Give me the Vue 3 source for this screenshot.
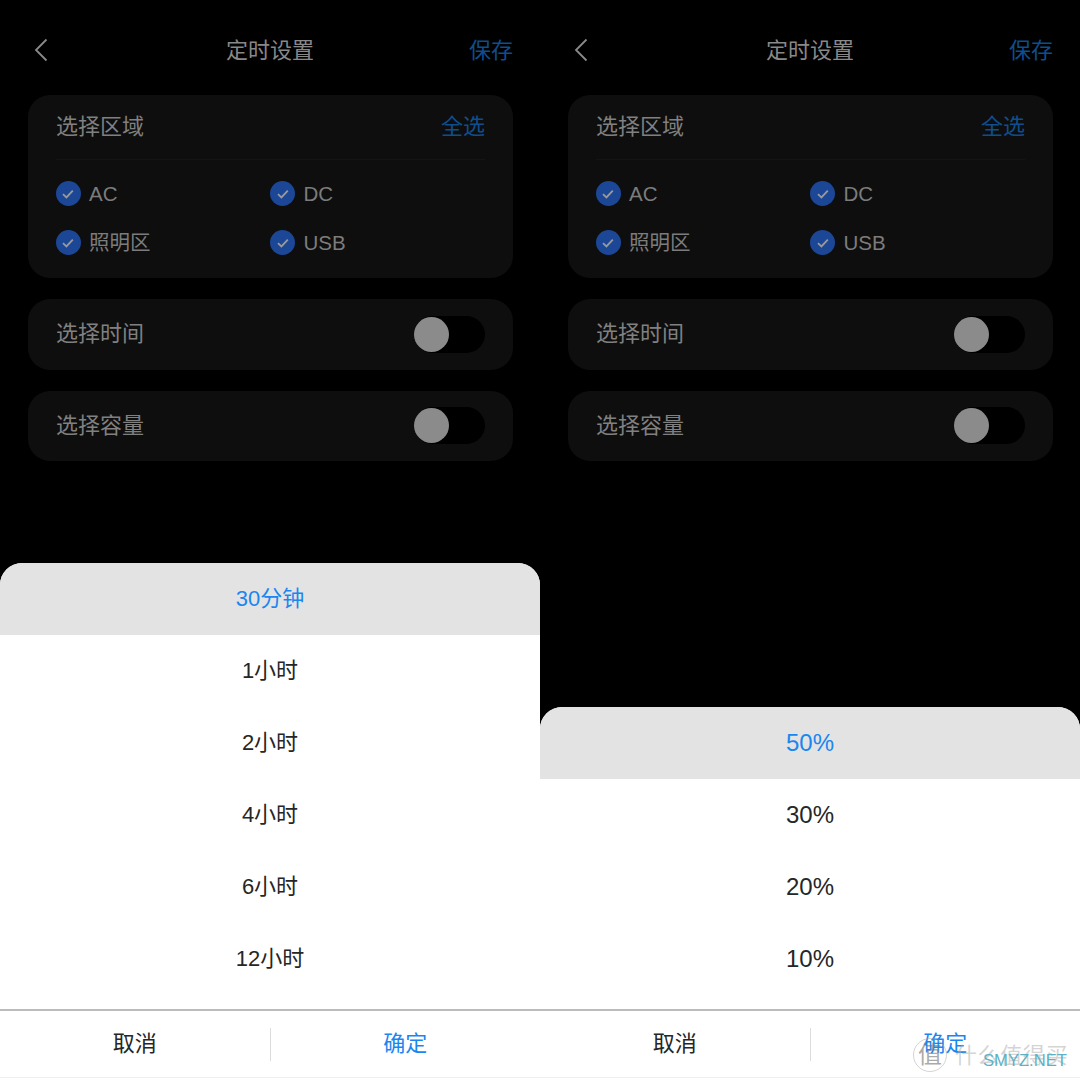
<script setup>
const panels = [
  { id: 'time', options: ['30分钟', '1小时', '2小时', '4小时', '6小时', '12小时'] },
  { id: 'capacity', options: ['50%', '30%', '20%', '10%'] }
]
const zones = ['AC', 'DC', '照明区', 'USB']
const toggles = ['选择时间', '选择容量']
</script>

<template>
  <div class="page">
    <section v-for="panel in panels" :key="panel.id" class="panel">
      <header class="topbar">
        <svg class="back" width="14" height="24" viewBox="0 0 14 24" fill="none">
          <path d="M12.5 1.5 L2 12 L12.5 22.5" stroke="#8a8a8a" stroke-width="1.8" />
        </svg>
        <h1 class="title">定时设置</h1>
        <span class="save">保存</span>
      </header>

      <div class="cards">
        <div class="card zone-card">
          <div class="zone-head">
            <span class="label">选择区域</span>
            <span class="select-all">全选</span>
          </div>
          <div class="zone-grid">
            <div v-for="zone in zones" :key="zone" class="zone">
              <span class="check">
                <svg width="14" height="12" viewBox="0 0 14 12" fill="none">
                  <path d="M2 6.2 L5.4 9.4 L11.8 2.6" stroke="#9a9a9a" stroke-width="1.8" />
                </svg>
              </span>
              <span class="zone-name">{{ zone }}</span>
            </div>
          </div>
        </div>

        <div v-for="toggle in toggles" :key="toggle" class="card toggle-card">
          <span class="label">{{ toggle }}</span>
          <span class="switch"><span class="knob"></span></span>
        </div>
      </div>

      <div class="sheet" :class="panel.id">
        <div
          v-for="(option, index) in panel.options"
          :key="option"
          class="option"
          :class="{ selected: index === 0 }"
        >{{ option }}</div>
        <div class="footer">
          <button class="action">取消</button>
          <span class="separator"></span>
          <button class="action primary">确定</button>
        </div>
      </div>
    </section>

    <div class="watermark">
      <span class="seal">值</span>
      <span class="wm-cn">什么值得买</span>
      <span class="wm-en">SMYZ.NET</span>
    </div>
  </div>
</template>

<style>
html, body { margin: 0; background: #000; }
</style>

<style scoped>
.page {
  position: relative;
  display: flex;
  width: 1080px;
  height: 1080px;
  overflow: hidden;
  background: #000;
  font-family: "Liberation Sans", "Noto Sans CJK SC", sans-serif;
}
.panel {
  display: flex;
  flex-direction: column;
  width: 540px;
  height: 1080px;
}
.topbar {
  position: relative;
  display: flex;
  align-items: center;
  justify-content: center;
  height: 98px;
  padding-top: 2px;
  flex: none;
}
.back { position: absolute; left: 34px; top: 38px; }
.title {
  margin: 0;
  font-size: 22px;
  font-weight: 400;
  line-height: 30px;
  color: #888;
}
.save {
  position: absolute;
  right: 27px;
  top: 36px;
  font-size: 22px;
  line-height: 30px;
  color: #0e4e8e;
}
.cards {
  display: flex;
  flex-direction: column;
  gap: 21px;
  margin: -5px 27px 0 28px;
}
.card {
  background: #0e0e0e;
  border-radius: 22px;
  padding: 0 28px;
}
.zone-head {
  display: flex;
  align-items: center;
  justify-content: space-between;
  height: 64px;
  border-bottom: 1px solid #151515;
}
.label { font-size: 22px; line-height: 30px; color: #808080; }
.select-all { font-size: 22px; line-height: 30px; color: #0e4e8e; }
.zone-grid {
  display: grid;
  grid-template-columns: 214.5px 1fr;
  grid-auto-rows: 49px;
  padding: 9px 0 11px;
  margin-left: -.5px;
}
.zone { display: flex; align-items: center; gap: 8.5px; }
.check {
  display: flex;
  align-items: center;
  justify-content: center;
  width: 25px;
  height: 25px;
  border-radius: 50%;
  background: #1c4796;
}
.zone-name { font-size: 20.5px; line-height: 28px; color: #7c7c7c; font-weight: 400; }
.toggle-card {
  display: flex;
  align-items: center;
  justify-content: space-between;
  height: 70.5px;
}
.switch {
  position: relative;
  display: block;
  width: 71px;
  height: 37px;
  border-radius: 19px;
  background: #000;
}
.knob {
  position: absolute;
  left: 0;
  top: 1px;
  width: 35px;
  height: 35px;
  border-radius: 50%;
  background: #8b8b8b;
}
.sheet {
  margin-top: auto;
  background: #fff;
  border-radius: 22px 22px 0 0;
  overflow: hidden;
  padding-bottom: 2px;
}
.option {
  display: flex;
  align-items: center;
  justify-content: center;
  height: 72px;
  font-size: 22px;
  line-height: 30px;
  color: #262626;
}
.sheet.capacity .option { font-size: 24px; }
.option.selected { background: #e3e3e3; color: #1a86f0; }
.footer {
  display: flex;
  align-items: center;
  height: 66px;
  margin-top: 14px;
  border-top: 2px solid #bcbcbc;
  border-bottom: 1px solid #efefef;
}
.action {
  flex: 1;
  padding: 0;
  border: 0;
  background: none;
  font: inherit;
  font-size: 22px;
  line-height: 30px;
  color: #262626;
}
.action.primary { color: #1a86f0; }
.separator { width: 1px; height: 33px; background: #dcdcdc; }
.watermark {
  position: absolute;
  right: 0;
  bottom: 0;
  width: 170px;
  height: 50px;
  pointer-events: none;
}
.seal {
  position: absolute;
  left: 3px;
  top: 8px;
  width: 32px;
  height: 32px;
  border: 1px solid rgba(170, 170, 170, .5);
  border-radius: 50%;
  font-size: 24px;
  line-height: 32px;
  text-align: center;
  color: rgba(120, 120, 120, .65);
}
.wm-cn {
  position: absolute;
  left: 45px;
  top: 13px;
  font-size: 22px;
  line-height: 26px;
  letter-spacing: .6px;
  color: rgba(170, 170, 170, .5);
  white-space: nowrap;
}
.wm-en {
  position: absolute;
  left: 73px;
  top: 21px;
  font-size: 16.6px;
  line-height: 20px;
  color: #5fb0c4;
  white-space: nowrap;
}
</style>
